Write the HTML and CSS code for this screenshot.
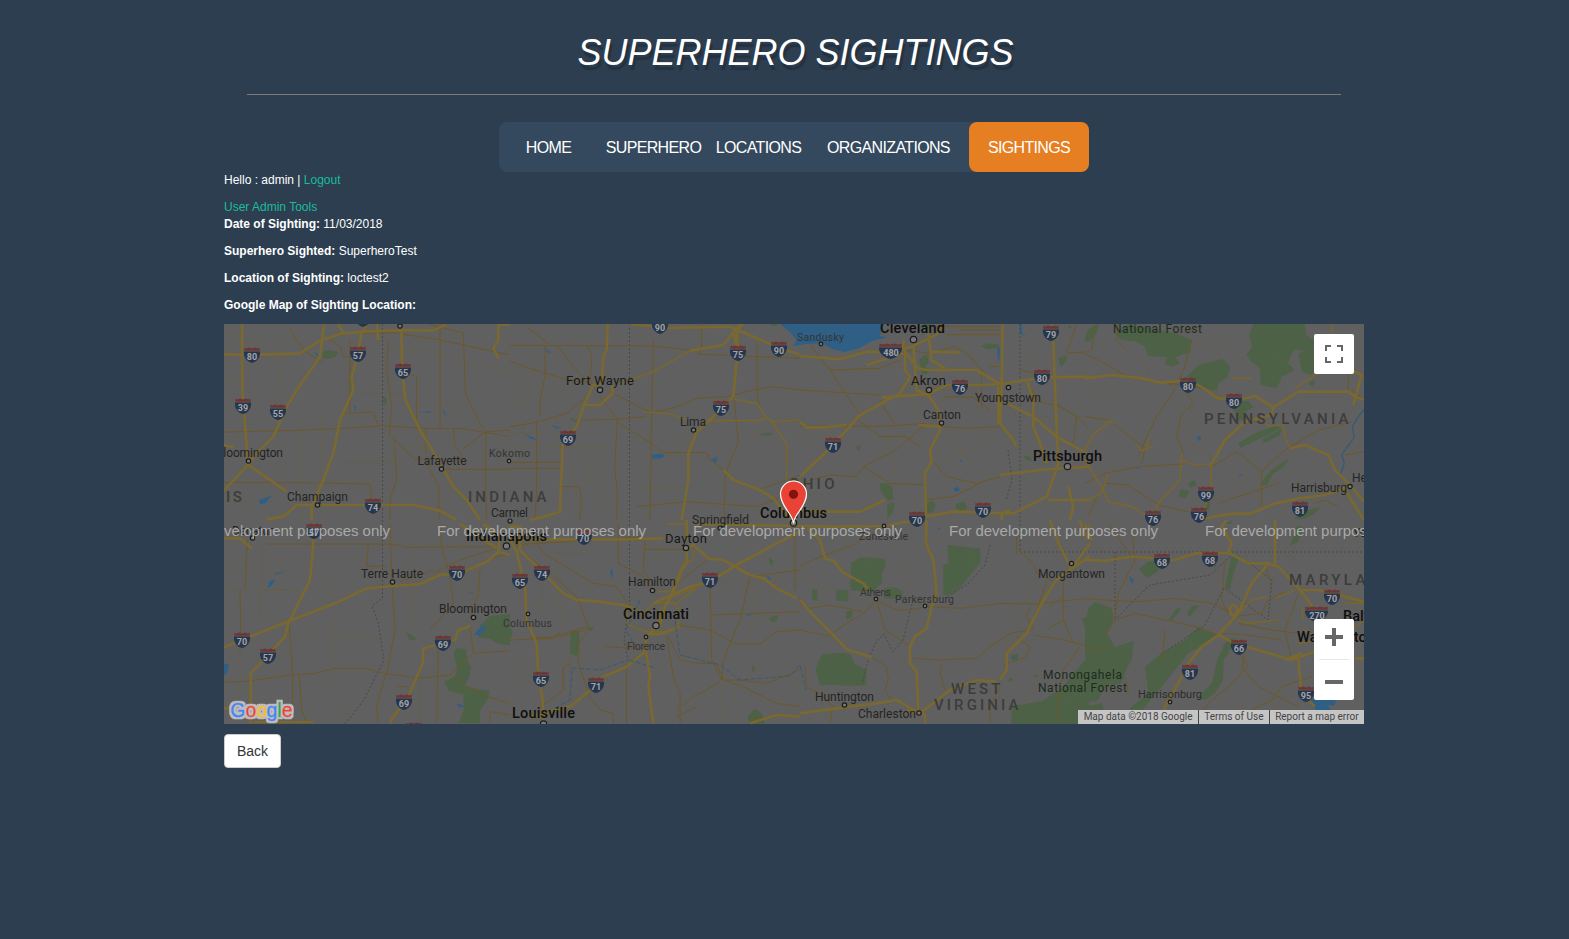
FILE: index.html
```html
<!DOCTYPE html>
<html lang="en">
<head>
<meta charset="utf-8">
<title>Superhero Sightings</title>
<link rel="stylesheet" href="styles.css">
</head>
<body>
<div class="container">
  <header class="header">
    <h1 class="title">SUPERHERO SIGHTINGS</h1>
  </header>
  <nav class="nav">
    <a>HOME</a><a>SUPERHERO</a><a>LOCATIONS</a><a>ORGANIZATIONS</a><a class="active">SIGHTINGS</a>
  </nav>
  <p>Hello : admin | <a class="link">Logout</a></p>
  <div><a class="link">User Admin Tools</a></div>
  <p><b>Date of Sighting:</b> 11/03/2018</p>
  <p><b>Superhero Sighted:</b> SuperheroTest</p>
  <p><b>Location of Sighting:</b> loctest2</p>
  <p><b>Google Map of Sighting Location:</b></p>
  <div class="map">
    <svg class="canvas" width="1140" height="400" viewBox="224 324 1140 400">
      <defs>
        <symbol id="sh" viewBox="0 0 16 16" overflow="visible"><path d="M0 4.400H16C16.600 10 13.500 14.500 8 16 2.500 14.500-.6 10 0 4.400Z" fill="#27364f"/><path d="M.4 3.800V.8L2.500 1.500 5 .5 8 1.500 11 .5 13.500 1.500 15.600.8V3.800Z" fill="#6f3434"/></symbol>
        <symbol id="shw" viewBox="0 0 23 16" overflow="visible"><path d="M0 4.400H23C23.500 10 18 14.500 11.500 16 5 14.500-.5 10 0 4.400Z" fill="#27364f"/><path d="M.4 3.800V.8L4 1.500 8 .5 11.500 1.500 15 .5 19 1.500 22.600.8V3.800Z" fill="#6f3434"/></symbol>
        <filter id="halo" x="-10%" y="-20%" width="120%" height="140%">
          <feMorphology in="SourceAlpha" operator="dilate" radius="1.500" result="fat"/>
          <feFlood flood-color="#bdbdbd"/>
          <feComposite in2="fat" operator="in" result="rim"/>
          <feMerge><feMergeNode in="rim"/><feMergeNode in="SourceGraphic"/></feMerge>
        </filter>
      </defs>
      <rect x="224" y="324" width="1140" height="400" fill="#606060"/>

      <!-- parks and water -->
      <g transform="translate(220 320) scale(.33333)">
        <path class="park" d="M308 95l20-4 26 5-8 14-20 8-18-4zM488 228l12 4v20l-12 3z"/>
        <path class="water" d="M116 540l22-7 22-9-15 14-8 12-16 2zM592 276l44-2-8 4zM667 266l15 24-12-12zM284 94l14 15-10-3zM402 262l6-8-1 22z"/>
      </g>
      <g transform="translate(510 320) scale(.33333)">
        <path class="park" d="M750 345l16-7h22l-6 9zM780 11h24l-6 8h-12zM180 292l30 14-22-2z"/>
        <path class="water" d="M425 405l18-4 22 3-8 11-28 2zM600 420l22-10-4 20zM44 340l40 20-22-3zM104 85l20 12-8 3zM124 316l28 6-12 4z"/>
      </g>
      <g transform="translate(800 320) scale(.33333)">
        <path class="water" d="M-60 12H250L240 48 262 52 215 64 178 84 135 96 98 88 68 70 20 72-22 78-10 60-30 36ZM658 12l6 0 4 30 14 8-22-8zM592 84l8-2-2 44-5-10zM460 506l14-6 6 12-14 3zM475 424l14-6-6 8z"/>
        <path class="park" d="M368 12l26 0-6 14-18 2zM542 78l22-8 32 4v10l-34 4zM358 118l22-16 6 24-10 14 12 18-22 6zM166 380l18-4-8 18zM240 490l24 0 14 14 2 34-16 4-22-28zM262 552l22-6-6 34-16 16zM382 552l14-12 12 18-12 20-16 0zM468 552l24-8 10 20-20 12-16-14zM776 114l24-8-2 18-14 18-6-14zM802 16l14 4-6 8zM670 405l20 6 8 12-20-3z"/>
      </g>
      <g transform="translate(1085 320) scale(.33333)">
        <path class="park" d="M0 55l10-28 30-15-3 20-12 23-20 12zM90 40L130 12 270 40 320 60 316 96 270 112 284 130 264 140 240 132 246 112 190 108 180 80 150 64 110 60ZM304 170L340 136 412 116 436 140 428 172 400 190 396 212 350 206 310 196ZM484 104l18-24-10-36 14-32H660l4 34 30 20-16 30-50-8-20 40 22 22-40 20-14 34-48-8-4-52-28-22zM640 100l46-14 0 40 18 14-28 24-24-8zM460 370l50-30 54-22 26 4-30 18-50 22-44 22zM530 360l60-34-4 18-44 24zM440 246l50-4 16 18-24 14 0 24-22 4zM524 496l30-42 60-40-20 28-30 20-20 34zM280 530l8-22 24 4-8 22zM308 490l22-10 4 16-18 8zM356 528l20 24-4 22-14-18zM626 596l50-28 30-6-22 22-30 14zM670 190l20-12-6 24z"/>
        <path class="water" d="M335 352l10-5 4 10-10 6zM458 466l18-4-10 6zM155 442l10 2-4 5z"/>
        <path d="M837 268L820 290 802 320 808 352 770 404 778 430 768 460M786 490L804 510 837 542" class="river tile-river"/>
      </g>
      <g transform="translate(220 520) scale(.33333)">
        <path class="park" d="M700 400l10-16 28 4 4 34 12 20-8 34-14 20 40 12 36 4-4 24-24 36 0 38H716l16-40-2-46-44-12-14-28 32-12 8-30zM780 318l30-30 60-6v94l-40-6-20-14-34-4zM560 336l32 22-24 2z"/>
        <path class="water" d="M142 206l6-22 16-6-4 14zM162 160l34-6-26 10zM12 430l16 4-8 26-8 8zM762 344l22-26 20 4-14 10-10 14zM710 550l26 10-20 2zM744 220l18-5-6 6z"/>
      </g>
      <g transform="translate(510 520) scale(.33333)">
        <path class="park" d="M182 332l26 2 0 34-8 40-20-8zM0 325l8 5-2 20-6 0zM778 112l12 10-4 16-8-8zM780 292l20-8 4 10-12 14-12-6zM724 438l12 0-6 22zM712 590l22-24 20 14 10 30H720zM230 324l20-2-4 12z"/>
        <path class="water" d="M300 158l8-16v34zM766 160l18 18-8 0zM708 286l26-4-18 6z"/>
      </g>
      <g transform="translate(800 520) scale(.33333)">
        <path class="park" d="M152 130l32-18 70 4 4 22-14 22 4 26-16 14-6 18-24-2-28-32-20 0zM430 212V134l16-4-4-56 98 12 2 40-60 74-24 22-28 4zM46 446l20-42 50-6 34 4 14 30 36 18-2 46-52 2-40-4-46 2zM110 210l34 0 2 34-38-2zM36 208l16 0 0 36-16-6zM138 272l22 0-6 22-14 4zM148 184l46 4-2 26-38-2zM254 204l30-2 26 14-8 20-46 0zM636 558l90-14 60-40 74-90 10 200H634zM846 296l24-8v90l-10-40zM632 408l22-8 0 18-18 4zM624 480l10-8 6 8-10 6zM700 468l14-6-2 12z"/>
        <path class="water" d="M634 412l16-2-10 8zM410 26l12-2-2 6zM796 258l8 0-3 4z"/>
      </g>
      <g transform="translate(1085 520) scale(.33333)">
        <path class="park" d="M0 310L10 264 30 246 80 264 86 300 66 340 90 382 146 362 140 420 124 448 110 490 60 500 40 540 0 550ZM180 440L230 400 300 360 340 320 394 344 360 372 310 400 270 450 230 500 180 560 150 600 110 596 140 560 190 520ZM0 560l50-10 20 62H0zM420 200l20-90 24-4-20 60-10 46zM162 148l28-24 40 0-10 30-34 20zM376 120l24-8-10 34zM396 420l24-50 26-20 0 24-30 46-2 60-24 40-34 22-14-14 40-40zM616 76l20-58 18 4-14 44zM250 300l28-38 10 6-28 34zM306 280l14-22 24-2-30 34zM420 12l20-12 0 12z"/>
        <path class="water" d="M132 168l16 12-8 12zM676 540l14-8 20 6 46 0-10 20-20-4 20 24-36 10-20-20zM182 200l4 6-6 0z"/>
      </g>

      <!-- borders -->
      <g class="border">
        <path d="M382.500 324V598L372 606 378 622 384 660 374 680 364 700 345 724"/>
        <path d="M629.500 324V604L624 640 628 660"/>
        <path d="M1020 324V552H1364" /><path d="M1008 450L1012 480 1006 500M990 545L985 565 968 584 945 598M912 604L903 640 893 652 884 634 876 642 868 660 862 684M1115 552V620M1115 620L1150 585 1210 575 1232 555M1252 565L1272 580 1268 620 1224 588 1205 625 1160 655"/>
      </g>

      <!-- secondary roads -->
      <g transform="translate(220 320) scale(.33333)">
        <path class="thin" d="M12 42H50M50 20V70H100L160 66 250 60M70 192L12 190M245 300V470L250 600M302 290V600M340 345L240 430 110 500M72 350H12M415 220H560M585 256H740M70 410H40M365 430H540M400 60L420 120 480 160M520 90L660 100 740 130 870 150M110 70L120 110 170 120 182 160V220L210 240M610 12L620 60 560 110M540 380H610M690 350V530M12 530H70L90 600M380 280L390 120M20 80L12 150M590 300L600 430M700 420H800M830 360L850 510 870 540"/>
        <path class="mid" d="M12 336L200 332 350 326 485 318 620 325 730 326 798 338 870 350M660 12V325M505 60L500 150 515 260 508 345 585 418 620 416M625 12L730 40 736 220 780 310 798 335 796 470 800 600M12 487L250 488 450 492 458 560M370 280L460 276 476 318M302 60L380 40 520 38 660 60 870 105M390 60V275M560 160L590 170V310M617 325V400M680 448H870M523 360L530 480 510 540V600M620 430L656 500 658 600M730 385L796 336 870 330M700 325L705 380 725 400 720 430M310 130L250 90 210 30M330 60L360 80 370 110 400 112"/>
        <path class="hwy" d="M66 12V110L68 230 78 350 84 430M12 103L95 105 240 100 300 62 360 42 440 34 560 30 640 32 680 12M312 12L300 110 240 195 200 260 160 350 110 400 84 434 12 512M425 34L415 100 395 170 400 210 360 300 340 400 310 480 275 560V600M544 30L546 150 556 240 600 330 660 430 700 500 740 540 780 600M84 434L200 515M140 598L190 590 230 555 440 555 580 555 660 572 710 600M355 12L370 40M470 12L475 62M12 375L40 382M870 14H835V60L820 85 835 115M440 12L430 34"/>
      </g>
      <g transform="translate(510 320) scale(.33333)">
        <path class="thin" d="M0 170L70 150 170 210 220 280M10 210H180M140 280V380L240 390V500M0 380H300M40 290V380L20 450M0 70L80 120 70 180M270 300V600M0 340H100M180 410L200 540M370 500H520M470 600L500 520M560 350L470 380M700 12L690 60M810 12L830 120M640 400L700 350 780 320M0 250H90"/>
        <path class="mid" d="M55 25L115 70M0 76L430 78 540 90M430 60L425 270 420 600M0 124L60 145 165 178 250 190M145 80L190 140 245 200M232 78L246 110 240 190M105 80V170L90 240V290M0 320L85 306 170 280 225 235M210 300L322 298 408 290M270 230L322 298 314 440 322 520 320 600M300 215L390 262 425 278 490 264 560 235 650 230 730 210 790 200 870 210M323 308L425 370 460 398 590 398 600 418 640 450M575 12V85L565 102 740 110 870 115M740 70L742 230 750 260M672 235L685 365 646 460 642 600M80 300V510L75 600M155 500H208L214 530 210 600M0 445H152M0 427H152M380 560L530 545 740 560 840 520M750 508L870 465"/>
        <path class="road" d="M325 192L430 155 540 92M672 238L740 250 770 295 790 305 870 300M785 305L830 370V480M400 275L480 282 530 300M590 302H750L770 290"/>
        <path class="hwy" d="M293 12L290 90 280 110 276 190 250 195 222 255 200 320 158 375 150 575 100 590 60 600M306 195L308 220 270 255 222 255M358 12L480 24 660 20 800 80 870 104M684 20L640 75 540 92M670 35L682 100 670 230 600 300 560 335 535 400V480L515 600M690 12L680 35 700 12M640 450L670 480 750 510 790 535 840 600M680 30L684 90"/>
      </g>
      <g transform="translate(800 320) scale(.33333)">
        <path class="thin" d="M310 90L180 160 90 150M350 150V300L400 345M240 250L300 330 240 400M60 200L120 250M420 350L520 430M500 280L530 330 600 360M430 210H530V270L600 280M270 310L260 380 290 470 270 560M430 12L440 120M480 12V90M650 60L700 140M790 60L730 130M410 440L500 400 560 380M0 350H100M180 470L260 470M20 590L60 540M440 330L490 350M640 270L660 320M300 130L250 160M280 200H520M520 100V200M710 290L870 290"/>
        <path class="mid" d="M30 75L90 150 180 285M90 150L240 145 300 120M0 210L240 225M0 318L270 318 375 310M310 90L395 100 460 80 500 100 560 165 600 200M440 44H600M410 20H600M430 230L520 232 570 270M380 310L280 395 190 440 170 470 90 465 0 490M190 440L270 490 370 495M420 320L500 325 600 320M400 425L440 470 530 490 600 470M690 205L720 245 780 260 830 290 870 330M830 12L800 100 870 95M765 250L830 290 820 370M370 540L460 530 560 480M160 290L240 350 320 350 360 380M710 160L660 150M600 30H480M570 140H600M545 150V265M240 240L280 310"/>
        <path class="hwy" d="M0 108L120 118 200 95 270 98 340 78 410 44 430 12M200 135L310 100M315 90V150L330 170 300 220 180 285 100 375 0 470M310 60V90L355 145 380 150 530 150 600 192 730 172 870 170M340 78L350 210 385 228M385 40L395 120 435 145M608 12L605 200 600 310 640 360M245 232L385 222 440 195H540L620 192M385 225L415 270 420 330 390 390 395 425 375 460 378 590M0 305L20 322 70 322 140 315M758 12L770 330 775 430 740 530 640 580 600 580M620 250L700 290 770 350 860 400M680 180L700 240V320L720 370 740 430M595 190V310M378 590L460 575 545 577 605 580 630 570M600 465L720 450 870 440M0 575L180 575 255 540M355 315L420 320M605 580V600M745 540H870M805 500L820 560 810 600M640 360L650 380M480 98L395 95"/>
      </g>
      <g transform="translate(1085 320) scale(.33333)">
        <path class="thin" d="M120 90L190 130V200L230 260 320 260 300 360 380 410M320 80L430 55 450 100 500 140 590 110 620 170M0 200L80 210 20 240M100 470L0 340M520 560L540 480 640 370M500 440L450 530M600 520L690 440M690 400L740 360M340 570L430 520M0 570L100 500"/>
        <path class="mid" d="M0 102L60 130 130 172M120 172L250 190 290 195 325 250 290 282 275 350 295 400M250 190L270 210 220 280 190 340 160 410M0 290L70 300 180 385 170 430M380 440L456 395 530 455 600 390 700 330 800 305M165 440L240 435 295 432M0 490L60 460 160 440M60 490L130 495 220 555 330 580M400 550L580 490M530 450V560M690 550L720 540 760 560M780 405L837 395M100 12L95 60 120 85M350 200L420 240 500 300 545 315M320 60L300 140 280 180M790 160V210M837 240L800 210M10 590L40 520M30 12L20 90"/>
        <path class="road" d="M0 390L20 350 70 305 90 308M156 376L170 392 205 378M185 392L190 352M290 400L285 480 220 550 200 600M290 420L330 435 375 432M378 440V505L350 590M0 420L60 520 70 545 140 560 200 598M0 545L50 520 70 460M630 205L690 165 740 145 740 12M540 312L555 318 595 315L600 350 615 385M440 175L500 175"/>
        <path class="hwy" d="M0 175L80 165 170 175 230 188 300 182 345 198 400 235 460 240 510 228 565 262 640 215 790 215 810 230 837 240M565 262L560 285 480 305 420 360 375 440M800 150L830 165 805 255M615 385L660 375 730 405 750 450 790 490 837 545M330 600L430 582 500 580 570 550 640 535 720 525 790 500M780 510L837 600"/>
      </g>
      <g transform="translate(220 520) scale(.33333)">
        <path class="thin" d="M12 120H190V160H12M130 70V210H210M340 300V500L380 610M12 210H240M120 210V290L200 300M210 340L380 350 480 350M580 70V320M380 110L440 130 500 200M520 250L600 210M730 140L760 240M12 380H60V610M640 540L760 510M700 100L740 60M830 60L780 140M600 430V610M240 120L330 180 340 240"/>
        <path class="mid" d="M140 72H520L560 82 820 80M445 70L440 138 500 140M510 12L516 190 525 330 500 460 480 520 470 560 475 610M208 310L218 460V610M12 487L90 483 210 465 290 460 340 445 440 445 490 460 600 475 690 465 760 400 870 392M690 465L740 500 800 530 870 550M640 160L720 120 830 85M660 12L665 80 690 170 700 250 630 330M60 210L62 320 60 390M238 466L245 568 260 610M540 185L640 150M655 370L650 610M750 320L760 400M780 150L775 220 750 290M870 100L800 120M810 610V575L870 585M560 500L530 500M12 490H0M82 60L75 210"/>
        <path class="hwy" d="M282 12L280 70 270 180 205 310 195 350 145 405 92 460V610M12 382L65 360 140 330 215 300 345 250 440 205 520 198 600 192 660 165 720 160 800 125 835 95 870 105M750 315L745 322 715 330 705 360 610 385 608 430 560 540 520 590 510 610M12 55H60L95 85M100 606H280M12 565H50M720 12L830 85M790 12L840 50 835 100"/>
      </g>
      <g transform="translate(510 520) scale(.33333)">
        <path class="thin" d="M100 180V260H20M30 80L110 70M150 160L155 330M270 180L160 200M600 190L870 180M520 400L600 420M320 360L200 400M0 480L100 490M360 100L460 50M690 170L740 290 700 370M740 180V270M630 480L640 610M440 80V140M230 100H140V260M730 440L640 580M800 460L870 500M760 170L800 250 870 260M180 410V540M0 430L60 450"/>
        <path class="mid" d="M55 25L100 100 250 190 320 200 355 255M405 60L400 150 435 200M325 12V130L400 170 440 230M405 88H520M25 85L120 160 200 230 235 320 130 350 60 355M0 360L130 355 230 330M590 120L490 200M600 180L605 420 635 480M600 285L870 275M500 315L600 330 680 372H750L800 335 870 330M475 350L510 420 560 430 620 430 640 480 690 480 770 490 870 450M470 350L490 470 510 520V610M350 430V610M630 485L580 515 550 530 500 570M205 430L240 530 270 570 310 580V610M640 480L700 500 760 530 800 550 870 560M185 430L160 440V510L80 570M635 480L640 420 690 300 720 170M240 325L205 370 205 430M720 170L870 150M855 12V210M500 590L560 560M720 600L800 590M130 350L150 340M20 74L400 50M400 385L280 380"/>
        <path class="road" d="M440 215L485 215 520 130 550 120 550 90M435 250L490 248 505 260V325L450 345M470 240L560 200M350 255L355 315 410 335 460 335M500 250L600 170M405 275L440 245M455 260L445 310M465 265L450 310M470 12L530 12"/>
        <path class="hwy" d="M0 60L20 95 45 200 50 300 80 370 85 460 98 540 100 610M25 85L100 160 160 220 200 240 270 245 355 258 410 290M0 58H180L350 58 460 55M410 345L455 340 510 320M440 320L410 350 405 395 350 440 280 470 230 520 180 560 60 590M408 395L420 470 415 500 430 610M450 320L465 260 490 215 515 150 530 130V85M530 0V60M590 115L640 120 720 165 760 175 800 205 860 235M430 250L540 200 600 185 680 135 800 70 870 35M530 85L550 75 595 115M0 20H30V85M870 590L800 585 720 610M555 12L870 18"/>
      </g>
      <g transform="translate(800 520) scale(.33333)">
        <path class="thin" d="M0 140L60 200 110 210 230 260M320 240L260 340M230 90L180 180M280 60L330 190M490 60L530 150M620 350V400M640 340L700 180M560 380L700 360M780 270L870 290M700 500L650 600M600 450V610M40 500L100 520M870 470L800 550"/>
        <path class="mid" d="M0 138L75 105 160 75 250 20M0 330L85 348 140 310 190 280 230 240 290 270 330 270 380 260 480 265 600 250 720 252M230 240L255 330 325 375M0 250L30 265 90 255 190 275M340 415L410 420 530 415 570 380 630 340 690 330 740 185M690 260L680 290 700 330M655 90L700 130 710 160 765 185M425 425L420 460 435 510M570 610V560L600 500M215 410L260 440 265 480 255 510 275 545M90 610L98 560 60 520 20 500 15 440M700 345L790 360 870 380M790 180V300L820 370M715 250L870 235M790 300L745 325M650 50V100M750 260L790 230M770 560L790 450 840 380M85 335L140 390M780 610L770 560M650 350L690 380 680 410 610 435"/>
        <path class="hwy" d="M22 25L60 60 75 115 105 125 125 155 190 190 210 215M0 18L100 20 250 18 350 0M380 0L378 70 400 120 410 220 395 260 380 325 345 350 330 380 330 430 350 455 355 570 375 585V610M0 580L110 565 230 550 290 540 360 580 450 510 530 480 590 485M600 480L620 450V400L680 340 690 320 725 250 765 185 815 145M0 240L35 280 90 335 140 388 215 412M750 0L780 80 815 145 855 90 870 70M840 0L850 40 870 55M815 145L870 110M320 570L360 580"/>
      </g>
      <g transform="translate(1085 520) scale(.33333)">
        <path class="thin" d="M0 230L70 250 90 330M270 240L210 330M440 290L540 330 600 370M320 360V430M490 400L460 480M600 80L640 130M560 270L590 330M540 420L600 480 570 550M20 60L60 100M700 100L740 60 780 90M440 120L380 180M580 240L620 330"/>
        <path class="mid" d="M0 236L60 240 160 245 270 235 380 250 440 280M0 395L80 380M90 300L150 280 240 300 330 320 400 345M440 290L530 280 550 240 600 215M450 380L490 440 430 500 380 540 330 600M560 540L500 570M460 310L560 330 640 340M480 400L470 440 520 500 640 560M405 340L490 345 590 360M90 300L60 350M420 120L410 240 430 280M140 30L150 120 100 220 90 290M560 540L590 500 680 470M240 330L230 430M120 470L130 520M640 220L600 330 620 420M540 130L560 200M70 12L140 110"/>
        <path class="road" d="M440 285L470 270 500 240 545 230M455 300L490 310 580 300M570 235L630 210M640 370L700 360M655 330L690 345M740 215L837 245M800 330L837 300M650 260L655 300M780 250L837 250M0 60L15 12"/>
        <path class="hwy" d="M0 120L60 122 140 110 270 120 330 100 430 98 490 130 550 130 580 140 650 215 690 270M430 98L440 70 410 20 425 0M550 130L500 190 460 280 400 345 350 380 310 430 280 490 240 560 235 600M445 255a10 16 0 1 0 1 0M570 130V0M400 345L450 370 520 390 620 420 690 395M640 210L700 210 837 245M0 12L20 60M810 415H837M600 420L650 400M640 420L650 520 690 560"/>
      </g>
      <path class="river" stroke-dasharray="5 2" d="M629 660L655 668M675 620L680 655 720 665 740 680 790 676 800 665 806 690M572 670L570 700 555 708M572 668L600 670 628 660M640 600L626 630 634 645"/>

      <!-- interstate shields -->
      <g class="shields">
        <use href="#sh" x="355" y="311" width="16" height="16"/><use href="#sh" x="406" y="722" width="16" height="16"/>
        <use href="#sh" x="244" y="347" width="16" height="16"/><use href="#sh" x="350" y="346" width="16" height="16"/><use href="#sh" x="395" y="363" width="16" height="16"/><use href="#sh" x="235" y="398" width="16" height="16"/><use href="#sh" x="270" y="404" width="16" height="16"/><use href="#sh" x="365" y="498" width="16" height="16"/>
        <use href="#sh" x="652" y="318" width="16" height="16"/><use href="#sh" x="730" y="345" width="16" height="16"/><use href="#sh" x="771" y="341" width="16" height="16"/><use href="#sh" x="713" y="400" width="16" height="16"/><use href="#sh" x="560" y="430" width="16" height="16"/>
        <use href="#shw" x="879" y="343" width="23" height="16"/><use href="#sh" x="952" y="379" width="16" height="16"/><use href="#sh" x="1043" y="325" width="16" height="16"/><use href="#sh" x="1034" y="369" width="16" height="16"/><use href="#sh" x="825" y="437" width="16" height="16"/><use href="#sh" x="909" y="511" width="16" height="16"/><use href="#sh" x="975" y="502" width="16" height="16"/>
        <use href="#sh" x="1180" y="377" width="16" height="16"/><use href="#sh" x="1226" y="393" width="16" height="16"/><use href="#sh" x="1198" y="486" width="16" height="16"/><use href="#sh" x="1191" y="507" width="16" height="16"/><use href="#sh" x="1145" y="510" width="16" height="16"/><use href="#sh" x="1292" y="501" width="16" height="16"/>
        <use href="#sh" x="306" y="523" width="16" height="16"/><use href="#sh" x="449" y="565" width="16" height="16"/><use href="#sh" x="234" y="632" width="16" height="16"/><use href="#sh" x="260" y="648" width="16" height="16"/><use href="#sh" x="435" y="635" width="16" height="16"/><use href="#sh" x="396" y="694" width="16" height="16"/>
        <use href="#sh" x="576" y="529" width="16" height="16"/><use href="#sh" x="534" y="565" width="16" height="16"/><use href="#sh" x="512" y="573" width="16" height="16"/><use href="#sh" x="702" y="572" width="16" height="16"/><use href="#sh" x="533" y="671" width="16" height="16"/><use href="#sh" x="588" y="677" width="16" height="16"/>
        <use href="#sh" x="1154" y="553" width="16" height="16"/><use href="#sh" x="1202" y="551" width="16" height="16"/><use href="#sh" x="1324" y="589" width="16" height="16"/><use href="#shw" x="1305" y="606" width="23" height="16"/><use href="#sh" x="1231" y="639" width="16" height="16"/><use href="#sh" x="1182" y="664" width="16" height="16"/><use href="#sh" x="1298" y="686" width="16" height="16"/>
        <text x="252" y="359.500">80</text><text x="358" y="358.500">57</text><text x="403" y="375.500">65</text><text x="243" y="410.500">39</text><text x="278" y="416.500">55</text><text x="373" y="510.500">74</text>
        <text x="660" y="330.500">90</text><text x="738" y="357.500">75</text><text x="779" y="353.500">90</text><text x="721" y="412.500">75</text><text x="568" y="442.500">69</text>
        <text x="891" y="355.500">480</text><text x="960" y="391.500">76</text><text x="1051" y="337.500">79</text><text x="1042" y="381.500">80</text><text x="833" y="449.500">71</text><text x="917" y="523.500">70</text><text x="983" y="514.500">70</text>
        <text x="1188" y="389.500">80</text><text x="1234" y="405.500">80</text><text x="1206" y="498.500">99</text><text x="1199" y="519.500">76</text><text x="1153" y="522.500">76</text><text x="1300" y="513.500">81</text>
        <text x="314" y="535.500">57</text><text x="457" y="577.500">70</text><text x="242" y="644.500">70</text><text x="268" y="660.500">57</text><text x="443" y="647.500">69</text><text x="404" y="706.500">69</text>
        <text x="584" y="541.500">70</text><text x="542" y="577.500">74</text><text x="520" y="585.500">65</text><text x="710" y="584.500">71</text><text x="541" y="683.500">65</text><text x="596" y="689.500">71</text>
        <text x="1162" y="565.500">68</text><text x="1210" y="563.500">68</text><text x="1332" y="601.500">70</text><text x="1317" y="618.500">270</text><text x="1239" y="651.500">66</text><text x="1190" y="676.500">81</text><text x="1306" y="698.500">95</text>
      </g>

      <!-- town markers -->
      <g class="dots">
        <circle cx="400" cy="326" r="2.200"/><circle cx="248.500" cy="461" r="2.200"/><circle cx="441.500" cy="469" r="2.200"/><circle cx="317.500" cy="505" r="2.200"/><circle cx="509" cy="461" r="1.800"/>
        <circle cx="600" cy="390" r="2.700"/><circle cx="693.500" cy="430" r="2.200"/><circle cx="913.500" cy="339.500" r="3.200"/><circle cx="821" cy="344" r="1.800"/><circle cx="929" cy="390" r="2.700"/><circle cx="941.500" cy="423" r="2.200"/><circle cx="1008.500" cy="387.500" r="2.200"/><circle cx="1067.500" cy="466.500" r="3.200"/><circle cx="1350" cy="486.500" r="2.200"/>
        <circle cx="252.500" cy="538" r="2.200"/><circle cx="392.500" cy="582" r="2.200"/><circle cx="473.500" cy="617.500" r="2.200"/><circle cx="506.500" cy="546" r="3.200"/><circle cx="510" cy="521" r="2"/><circle cx="528" cy="614" r="1.800"/><circle cx="686" cy="548" r="2.700"/><circle cx="720" cy="528" r="2"/><circle cx="652.500" cy="590.500" r="2.200"/><circle cx="656" cy="625.500" r="3.200"/><circle cx="646" cy="637" r="1.800"/><circle cx="543.500" cy="724" r="3.200"/><circle cx="793.500" cy="523" r="3.200"/>
        <circle cx="884" cy="526" r="1.800"/><circle cx="876" cy="599" r="1.800"/><circle cx="925" cy="606" r="1.800"/><circle cx="844.500" cy="705" r="2.200"/><circle cx="919" cy="713" r="2.200"/><circle cx="1071.500" cy="563.500" r="2.200"/><circle cx="1170" cy="702" r="1.800"/>
      </g>

      <g class="label" transform="translate(0 .5)">
        <text class="s" x="797" y="340" textLength="47">Sandusky</text><text class="s" x="489" y="456" textLength="41">Kokomo</text><text class="s" x="503" y="626" textLength="49">Columbus</text><text class="s" x="859" y="539" textLength="49">Zanesville</text><text class="s" x="627" y="649" textLength="38">Florence</text><text class="s" x="860" y="595" textLength="31">Athens</text><text class="s" x="895" y="602" textLength="59">Parkersburg</text>
        <text x="923" y="418" textLength="38">Canton</text><text x="975" y="401" textLength="66">Youngstown</text><text x="680" y="425" textLength="26">Lima</text><text x="417.500" y="464" textLength="49">Lafayette</text><text x="287" y="500" textLength="61">Champaign</text><text x="216" y="456" textLength="67">Bloomington</text><text x="491" y="516" textLength="37">Carmel</text><text x="232" y="534" textLength="41">Decatur</text><text x="361" y="577" textLength="62">Terre Haute</text><text x="439" y="612" textLength="68">Bloomington</text><text x="692" y="523" textLength="57">Springfield</text><text x="628" y="585" textLength="48">Hamilton</text><text x="815" y="700" textLength="59">Huntington</text><text x="858" y="717" textLength="58">Charleston</text><text x="1138" y="697" textLength="64" class="h">Harrisonburg</text><text x="1038" y="577" textLength="67">Morgantown</text><text x="1291" y="491" textLength="56">Harrisburg</text><text x="1352" y="481">Hershey</text><text x="1353" y="536">York</text>
        <text class="g" x="1043" y="678" textLength="79">Monongahela</text><text class="g" x="1038" y="691" textLength="89">National Forest</text><text class="g" x="1113" y="332" textLength="89">National Forest</text>
        <text class="m" x="911" y="384" textLength="35">Akron</text><text class="m" x="566" y="384" textLength="68">Fort Wayne</text><text class="m" x="665" y="542" textLength="42">Dayton</text>
        <text class="b" x="880" y="332" textLength="65">Cleveland</text><text class="b" x="466" y="540" textLength="81">Indianapolis</text><text class="b" x="760" y="517" textLength="67">Columbus</text><text class="b" x="623" y="618" textLength="66">Cincinnati</text><text class="b" x="512" y="717" textLength="63">Louisville</text><text class="b" x="1033" y="460" textLength="69">Pittsburgh</text><text class="b" x="1343" y="620">Baltimore</text><text class="b" x="1297" y="641" textLength="78">Washington</text>
        <text class="st" x="226" y="501">IS</text><text class="st" x="468" y="501" textLength="81">INDIANA</text><text class="st" x="789" y="488" textLength="48">OHIO</text><text class="st" x="1204" y="423" textLength="147">PENNSYLVANIA</text><text class="st" x="951" y="693" textLength="52">WEST</text><text class="st" x="934" y="709" textLength="87">VIRGINIA</text><text class="st" x="1289" y="584" textLength="106">MARYLAND</text>
      </g>

      <g class="watermark">
        <text x="181" y="535.500" textLength="209">For development purposes only</text><text x="437" y="535.500" textLength="209">For development purposes only</text><text x="693" y="535.500" textLength="209">For development purposes only</text><text x="949" y="535.500" textLength="209">For development purposes only</text><text x="1205" y="535.500" textLength="209">For development purposes only</text>
      </g>

      <path d="M793.500 523.500C793 513.500 780.500 507 780.500 494a13 13 0 0 1 26 0C806.500 507 794 513.500 793.500 523.500Z" fill="#ea4335" stroke="#fff" stroke-width="1.200"/>
      <circle cx="793.500" cy="494.300" r="4.600" fill="#811411"/>
      <text class="google" filter="url(#halo)" x="230.500" y="716.500" textLength="62" lengthAdjust="spacingAndGlyphs"><tspan fill="#4285f4" stroke="#4285f4">G</tspan><tspan fill="#ea4335" stroke="#ea4335">o</tspan><tspan fill="#fbbc05" stroke="#fbbc05">o</tspan><tspan fill="#4285f4" stroke="#4285f4">g</tspan><tspan fill="#34a853" stroke="#34a853">l</tspan><tspan fill="#ea4335" stroke="#ea4335">e</tspan></text>
    </svg>
    <div class="control fullscreen">
      <svg width="18" height="18" viewBox="0 0 18 18"><path d="M1 6V1H6M12 1H17V6M17 12V17H12M6 17H1V12" fill="none" stroke="#666" stroke-width="2"/></svg>
    </div>
    <div class="control zoom">
      <svg width="18" height="18" viewBox="0 0 18 18"><path d="M9 0V18M0 9H18" stroke="#666" stroke-width="4"/></svg>
      <span class="divider"></span>
      <svg width="18" height="18" viewBox="0 0 18 18"><path d="M0 9H18" stroke="#666" stroke-width="4"/></svg>
    </div>
    <div class="credits"><span>Map data ©2018 Google</span><span>Terms of Use</span><span>Report a map error</span></div>
  </div>
  <button class="back">Back</button>
</div>
</body>
</html>
```
FILE: styles.css
```css
* { box-sizing: border-box; }
body { margin: 0; background: #2c3e50; color: #fff; font: 12px/17px "Liberation Sans", Arial, sans-serif; }
.container { width: 1140px; margin-left: 224px; }
.header { height: 95px; margin: 0 23px 27px; padding-top: 33px; border-bottom: 1px solid #7b7b79; }
.title { margin: 0 0 0 3px; text-align: center; font-size: 36px; line-height: 40px; font-weight: 400; font-style: italic; text-shadow: 2px 5px 1px rgba(0, 0, 0, .2); }
.nav { display: grid; grid-template-columns: 99px 111px 99px 161px 120px; width: 590px; height: 50px; margin-left: 275px; background: #34495e; border-radius: 8px; }
.nav a { display: flex; align-items: center; justify-content: center; font-size: 16px; letter-spacing: -.65px; }
.nav .active { background: #e67e22; border-radius: 8px; }
p { margin: 0 0 10px; }
.link { color: #1abc9c; }
.map { position: relative; width: 1140px; height: 400px; overflow: hidden; }
.canvas { display: block; }
.park { fill: #4c6146; }
.water { fill: #2f5f85; }
.river { fill: none; stroke: #355a78; stroke-width: 1; }
.tile-river { stroke-width: 4; }
.thin, .mid, .road, .hwy { fill: none; stroke-linejoin: round; }
.thin { stroke: #6a6040; stroke-width: 2; opacity: .7; }
.mid { stroke: #6c5828; stroke-width: 3; }
.road { stroke: #78662f; stroke-width: 5; }
.hwy { stroke: #79682f; stroke-width: 8; }
.border { fill: none; stroke: #484848; stroke-width: 1; stroke-dasharray: 2 2; }
.shields text { font: 700 9px Roboto, sans-serif; fill: #a4a4a4; text-anchor: middle; }
.dots { fill: #777; stroke: #1c1c1c; stroke-width: 1.2; }
.label text { font: 400 12px Roboto, sans-serif; fill: #242424; }
.label .s { font-size: 10.500px; fill: #343434; }
.label .h { font-size: 11px; fill: #2c2c2c; }
.label .m { font-size: 13px; fill: #181818; }
.label .g { fill: #1d2b1c; }
.label .b { font-size: 14.500px; font-weight: 500; fill: #0f0f0f; }
.label .st { font-size: 15px; font-weight: 500; letter-spacing: 2.5px; fill: #3c3c3c; }
.watermark text { font: 15px "Liberation Sans", Arial, sans-serif; fill: #a9a9a9; }
.google { font: 400 21px "Liberation Sans", Arial, sans-serif; stroke-width: .5px; }
.control { position: absolute; right: 10px; width: 40px; display: flex; flex-direction: column; align-items: center; background: #fff; border-radius: 2px; }
.fullscreen { top: 10px; height: 40px; justify-content: center; }
.zoom { bottom: 24px; height: 81px; padding: 9px 0; justify-content: space-between; }
.divider { width: 30px; height: 1px; background: #e6e6e6; }
.credits { position: absolute; right: 0; bottom: 0; display: flex; height: 14px; background: #c5c5c5; color: #444; font: 10px/14px Roboto, sans-serif; }
.credits span { padding: 0 5.4px 0 5.3px; white-space: nowrap; }
.credits span + span { border-left: 1px solid #444; }
.back { display: block; width: 57px; height: 34px; margin-top: 10px; padding: 0; border: 1px solid #ccc; border-radius: 4px; background: #fff; color: #333; font: 14px "Liberation Sans", Arial, sans-serif; }
```
